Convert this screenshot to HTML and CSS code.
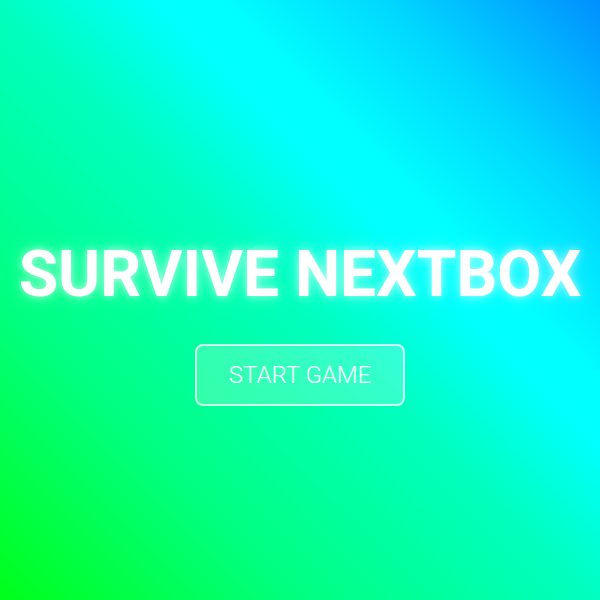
FILE: index.html
```html
<!DOCTYPE html>
<html>
<head>
<meta charset="utf-8">
<link rel="stylesheet" href="styles.css">
</head>
<body>
<main class="screen">
  <h1 class="title">SURVIVE NEXTBOX</h1>
  <button class="start">START GAME</button>
</main>
</body>
</html>
```
FILE: styles.css
```css
html, body {
  margin: 0;
  padding: 0;
  height: 100%;
}
body {
  font-family: Roboto, "Liberation Sans", sans-serif;
  background: linear-gradient(45deg, #00ff1a 0%, #00ff80 25%, #00ffc0 50%, #00ffff 63%, #00ffff 68%, #00d8ff 82%, #0090ff 100%);
  overflow: hidden;
}
.screen {
  height: 600px;
  display: flex;
  flex-direction: column;
  align-items: center;
  justify-content: center;
  gap: 37px;
  padding-top: 49px;
  box-sizing: border-box;
}
.title {
  margin: 0;
  color: #fff;
  font-size: 64px;
  font-weight: 700;
  line-height: 1;
  text-shadow: 0 0 8px rgba(255,255,255,0.6), 0 0 18px rgba(255,255,255,0.35);
}
.start {
  width: 210px;
  height: 62px;
  font-family: Roboto, "Liberation Sans", sans-serif;
  font-size: 24px;
  font-weight: 300;
  color: #fff;
  background: rgba(255,255,255,0.2);
  border: 2px solid rgba(255,255,255,0.75);
  border-radius: 8px;
  padding: 0;
}
```
